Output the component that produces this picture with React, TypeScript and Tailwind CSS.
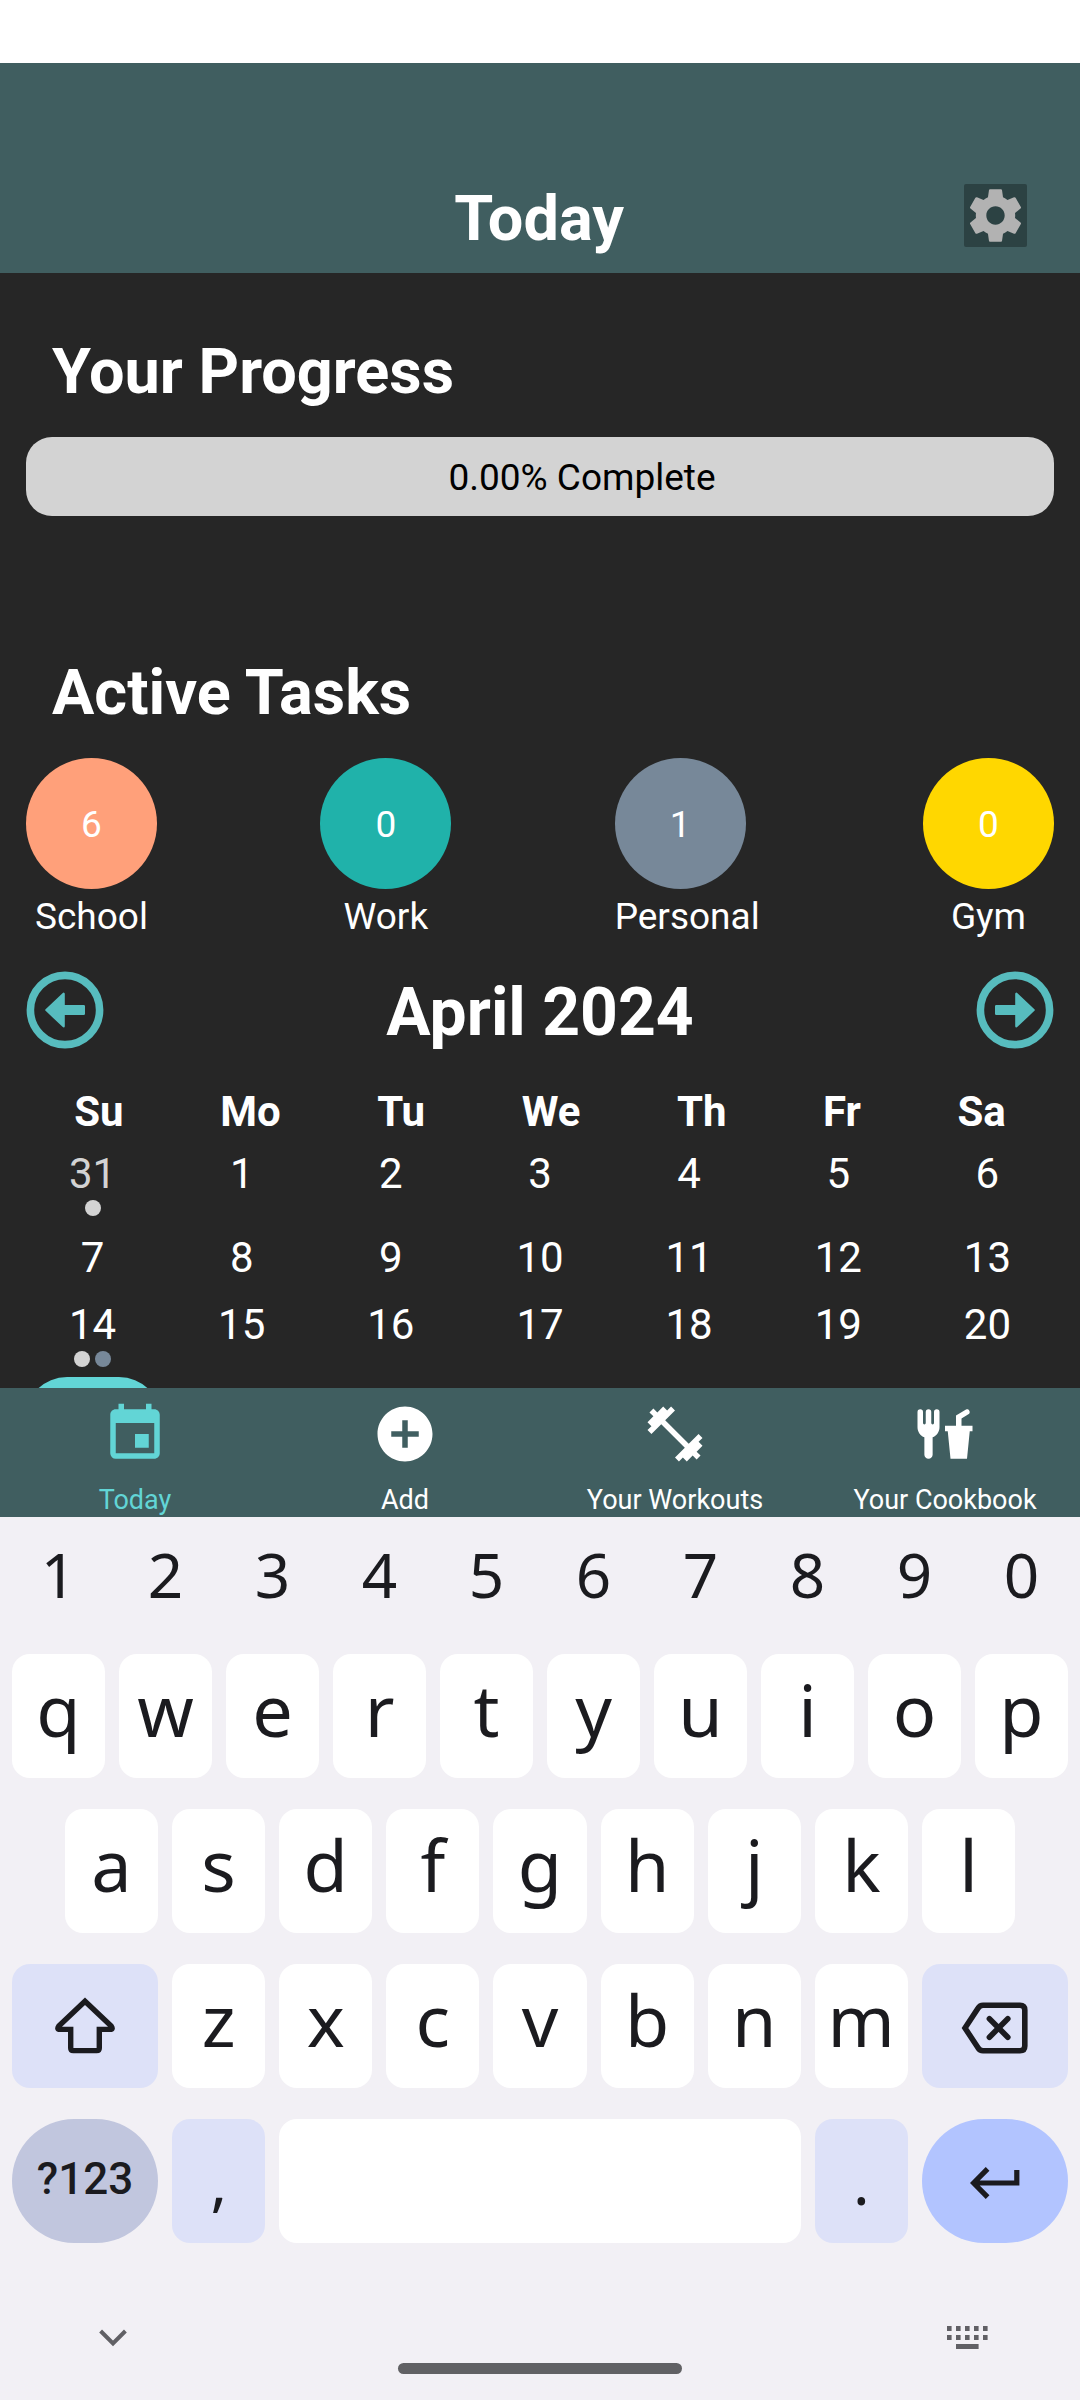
import type { ReactNode } from "react";
import { MdAddCircle, MdEvent, MdFitnessCenter } from "react-icons/md";

const categories = [
  { name: "School", count: 6, color: "bg-[#ffa07a]" },
  { name: "Work", count: 0, color: "bg-[#20b2aa]" },
  { name: "Personal", count: 1, color: "bg-[#778899]" },
  { name: "Gym", count: 0, color: "bg-[#ffd700]" },
];

const weekdays = ["Su", "Mo", "Tu", "We", "Th", "Fr", "Sa"];

type Day = { day: number; muted?: boolean; dots?: string[] };

const weeks: Day[][] = [
  [{ day: 31, muted: true, dots: ["bg-[#d3d3d3]"] }, { day: 1 }, { day: 2 }, { day: 3 }, { day: 4 }, { day: 5 }, { day: 6 }],
  [7, 8, 9, 10, 11, 12, 13].map((day) => ({ day })),
  [{ day: 14, dots: ["bg-[#d3d3d3]", "bg-[#778899]"] }, { day: 15 }, { day: 16 }, { day: 17 }, { day: 18 }, { day: 19 }, { day: 20 }],
];

function GearIcon() {
  return (
    <svg viewBox="0 0 24 24" className="size-full" fill="#b2b2b2" aria-hidden="true">
      <path d="M19.43 12.98c.04-.32.07-.64.07-.98s-.03-.66-.07-.98l2.11-1.65c.19-.15.24-.42.12-.64l-2-3.46c-.12-.22-.39-.3-.61-.22l-2.49 1c-.52-.4-1.08-.73-1.69-.98l-.38-2.65C14.46 2.18 14.25 2 14 2h-4c-.25 0-.46.18-.49.42l-.38 2.65c-.61.25-1.17.59-1.69.98l-2.49-1c-.23-.09-.49 0-.61.22l-2 3.46c-.13.22-.07.49.12.64l2.11 1.65c-.04.32-.07.65-.07.98s.03.66.07.98l-2.11 1.65c-.19.15-.24.42-.12.64l2 3.46c.12.22.39.3.61.22l2.49-1c.52.4 1.08.73 1.69.98l.38 2.65c.03.24.24.42.49.42h4c.25 0 .46-.18.49-.42l.38-2.65c.61-.25 1.17-.59 1.69-.98l2.49 1c.23.09.49 0 .61-.22l2-3.46c.12-.22.07-.49-.12-.64l-2.11-1.65zM12 15.5c-1.93 0-3.5-1.57-3.5-3.5s1.57-3.5 3.5-3.5 3.5 1.57 3.5 3.5-1.57 3.5-3.5 3.5z" />
    </svg>
  );
}

function CircleArrow({ flip = false }: { flip?: boolean }) {
  return (
    <svg viewBox="0 0 78 78" className={flip ? "size-[78px] -scale-x-100" : "size-[78px]"} fill="none" aria-hidden="true">
      <circle cx="39" cy="39" r="34.6" stroke="#57bcbe" strokeWidth="7.6" />
      <path
        d="M20.4 39 37.6 22.8V35.2H57.8V42.8H37.6V55.2Z"
        fill="#57bcbe"
        stroke="#57bcbe"
        strokeWidth="2.4"
        strokeLinejoin="round"
      />
    </svg>
  );
}

function ForkDrinkIcon() {
  return (
    <svg viewBox="0 0 24 24" className="size-[66px]" fill="currentColor" aria-hidden="true">
      <path d="M3,3A1,1 0 0,0 2,4V8L2,9.5C2,11.19 3.03,12.63 4.5,13.22V19.5A1.5,1.5 0 0,0 6,21A1.5,1.5 0 0,0 7.5,19.5V13.22C8.97,12.63 10,11.19 10,9.5V8L10,4A1,1 0 0,0 9,3A1,1 0 0,0 8,4V8A0.5,0.5 0 0,1 7.5,8.5A0.5,0.5 0 0,1 7,8V4A1,1 0 0,0 6,3A1,1 0 0,0 5,4V8A0.5,0.5 0 0,1 4.5,8.5A0.5,0.5 0 0,1 4,8V4A1,1 0 0,0 3,3M19.88,3C19.75,3 19.62,3.09 19.5,3.16L16,5.25V9H12V11H13L14,21H20L21,11H22V9H18V6.34L20.5,4.84C21,4.56 21.13,4 20.84,3.5C20.63,3.14 20.26,2.95 19.88,3Z" />
    </svg>
  );
}

function ShiftIcon() {
  return (
    <svg viewBox="0 0 60 58" className="h-[58px] w-[60px]" fill="none" stroke="#1b1b1f" strokeWidth="5.4" aria-hidden="true">
      <path d="M30 4.2 3.8 29Q1.4 32.4 5 32.4H15.7V51Q15.7 53.6 18.3 53.6H41.7Q44.3 53.6 44.3 51V32.4H55Q58.6 32.4 56.2 29Z" />
    </svg>
  );
}

function BackspaceIcon() {
  return (
    <svg viewBox="0 0 68 54" className="h-[54px] w-[68px]" fill="none" stroke="#1b1b1f" strokeWidth="5.6" aria-hidden="true">
      <path d="M4 27 17 7.2Q18.8 4.2 22 4.2H59Q63.8 4.2 63.8 9V45Q63.8 49.8 59 49.8H22Q18.8 49.8 17 46.8Z" />
      <path d="M28.4 17.8 46.8 36.2M46.8 17.8 28.4 36.2" strokeLinecap="round" />
    </svg>
  );
}

function EnterIcon() {
  return (
    <svg viewBox="0 0 50 32" className="h-8 w-[50px]" fill="none" stroke="#1b1b1f" strokeWidth="5.2" aria-hidden="true">
      <path d="M17.6 1.8 3.6 16 17.6 30.2M3.6 16H46.8V3" />
    </svg>
  );
}

function SwitchKeyboardIcon() {
  const cols = [0, 9, 18, 27, 36];
  return (
    <svg viewBox="0 0 41 24" className="h-6 w-[41px]" fill="#616065" aria-hidden="true">
      {cols.map((x) => (
        <path key={x} d={`M${x} 0h4.6v5h-4.6zM${x} 9h4.6v5h-4.6z`} />
      ))}
      <path d="M9 18h22.6v5H9z" />
    </svg>
  );
}

function Tab({ icon, label, active = false }: { icon: ReactNode; label: string; active?: boolean }) {
  return (
    <button
      type="button"
      aria-current={active ? "page" : undefined}
      className={
        active
          ? "flex flex-1 flex-col items-center gap-4 pt-[13px] text-[#62d5d6]"
          : "flex flex-1 flex-col items-center gap-4 pt-[13px] text-white"
      }
    >
      {icon}
      <span className="text-[27px] leading-[34px] whitespace-nowrap">{label}</span>
    </button>
  );
}

function LetterKey({ letter }: { letter: string }) {
  return (
    <button
      type="button"
      className="flex h-[124px] flex-[93] basis-0 items-center justify-center rounded-[18px] bg-white pb-[14px] text-[72px] leading-none"
    >
      {letter}
    </button>
  );
}

function Keyboard() {
  return (
    <section aria-label="Keyboard" className="shrink-0 bg-[#f2f0f5] pt-2 font-['Noto_Sans',sans-serif] text-[#1b1b1f]">
      <div className="flex flex-col gap-[31px] px-3">
        <div className="flex gap-[14px]">
          {[..."1234567890"].map((n) => (
            <button key={n} type="button" className="flex h-[98px] flex-1 items-center justify-center text-[62px] leading-none">
              {n}
            </button>
          ))}
        </div>
        <div className="flex gap-[14px]">
          {[..."qwertyuiop"].map((l) => (
            <LetterKey key={l} letter={l} />
          ))}
        </div>
        <div className="flex gap-[14px] px-[5%]">
          {[..."asdfghjkl"].map((l) => (
            <LetterKey key={l} letter={l} />
          ))}
        </div>
        <div className="flex gap-[14px]">
          <button type="button" aria-label="Shift" className="flex h-[124px] flex-[146] basis-0 items-center justify-center rounded-[18px] bg-[#dde1f8]">
            <ShiftIcon />
          </button>
          {[..."zxcvbnm"].map((l) => (
            <LetterKey key={l} letter={l} />
          ))}
          <button type="button" aria-label="Backspace" className="flex h-[124px] flex-[146] basis-0 items-center justify-center rounded-[18px] bg-[#dde1f8] pt-1">
            <BackspaceIcon />
          </button>
        </div>
        <div className="flex gap-[14px]">
          <button type="button" className="flex h-[124px] flex-[146] basis-0 items-center justify-center rounded-[62px] bg-[#c1c6de] pb-1 font-[Roboto,sans-serif] text-[44px] leading-none font-medium">
            ?123
          </button>
          <button type="button" className="flex h-[124px] flex-[93] basis-0 items-center justify-center rounded-[18px] bg-[#dde1f8] text-[62px] leading-none">
            ,
          </button>
          <button type="button" aria-label="Space" className="h-[124px] flex-[521] basis-0 rounded-[18px] bg-white" />
          <button type="button" className="flex h-[124px] flex-[93] basis-0 items-center justify-center rounded-[18px] bg-[#dde1f8] text-[62px] leading-none">
            .
          </button>
          <button type="button" aria-label="Enter" className="flex h-[124px] flex-[146] basis-0 items-center justify-center rounded-[62px] bg-[#b2c4ff] pt-1">
            <EnterIcon />
          </button>
        </div>
      </div>
      <div className="flex items-center justify-between pt-[83px] pr-[92px] pl-[99px]">
        <button type="button" aria-label="Hide keyboard">
          <svg viewBox="0 0 28 18" className="h-[18px] w-7" fill="none" stroke="#616065" strokeWidth="4" aria-hidden="true">
            <path d="M1.6 2 14 14.4 26.4 2" />
          </svg>
        </button>
        <button type="button" aria-label="Switch keyboard">
          <SwitchKeyboardIcon />
        </button>
      </div>
      <div className="flex justify-center pt-[13px] pb-[26px]">
        <div className="h-[11px] w-[284px] rounded-md bg-[#616164]" />
      </div>
    </section>
  );
}

export default function App() {
  return (
    <div className="flex h-screen flex-col bg-[#262626] font-[Roboto,sans-serif] text-white">
      <div className="h-[63px] shrink-0 bg-white" />
      <header className="grid h-[210px] shrink-0 grid-cols-[1fr_auto_1fr] items-end bg-[#405e60] pr-[53px] pb-[15px]">
        <h1 className="col-start-2 pl-[51px] text-[63px] leading-[78px] font-bold">Today</h1>
        <button type="button" aria-label="Settings" className="mb-[11px] size-[63px] justify-self-end rounded-[2px] bg-[#2c4243]">
          <GearIcon />
        </button>
      </header>

      <main className="min-h-0 flex-1 overflow-hidden pt-[62px]">
        <h2 className="px-[52px] text-[63px] leading-[74px] font-bold">Your Progress</h2>
        <div
          role="progressbar"
          aria-label="Your progress"
          aria-valuenow={0}
          className="mx-[26px] mt-7 flex h-[79px] items-center justify-center rounded-[26px] bg-[#d3d3d3] pt-[2px] pl-[84px] text-[37px] leading-[44px] text-black"
        >
          0.00% Complete
        </div>

        <h2 className="mt-[140px] px-[52px] text-[63px] leading-[74px] font-bold">Active Tasks</h2>
        <div className="mx-[26px] mt-7 flex justify-between text-[37px] leading-[44px]">
          {categories.map((c) => (
            <div key={c.name}>
              <div className={`flex size-[131px] items-center justify-center rounded-full pt-[2px] ${c.color}`}>{c.count}</div>
              <div className="mt-[6px] text-center">{c.name}</div>
            </div>
          ))}
        </div>

        <div className="mx-[26px] mt-8 flex items-start justify-between">
          <button type="button" aria-label="Previous month">
            <CircleArrow />
          </button>
          <h2 className="text-[66px] leading-[84px] font-bold">April 2024</h2>
          <button type="button" aria-label="Next month">
            <CircleArrow flip />
          </button>
        </div>

        <div className="mx-[26px] mt-8 flex justify-around text-[42px] leading-[50px] font-bold">
          {weekdays.map((d) => (
            <div key={d}>{d}</div>
          ))}
        </div>
        <div className="mx-[18px] mt-1 flex flex-col gap-[9px]">
          {weeks.map((week) => (
            <div key={week[0].day} className="grid grid-cols-7 items-start">
              {week.map(({ day, muted, dots }) => (
                <button key={day} type="button" className="flex flex-col items-center pt-2 text-[42px] leading-[50px]">
                  <span className={muted ? "text-[#d3d3d3]" : "text-white"}>{day}</span>
                  {dots && (
                    <span className="mt-px flex gap-[5px]">
                      {dots.map((dot) => (
                        <span key={dot} className={`size-4 rounded-full ${dot}`} />
                      ))}
                    </span>
                  )}
                </button>
              ))}
            </div>
          ))}
          <div className="grid grid-cols-7">
            <button type="button" aria-label="Selected day" className="mt-px h-[84px] w-[136px] justify-self-center rounded-[42px] bg-[#62d5d6]" />
          </div>
        </div>
      </main>

      <nav className="flex h-[129px] shrink-0 bg-[#405e60]">
        <Tab active label="Today" icon={<MdEvent className="size-[66px]" />} />
        <Tab label="Add" icon={<MdAddCircle className="size-[66px]" />} />
        <Tab label="Your Workouts" icon={<MdFitnessCenter className="size-[66px]" />} />
        <Tab label="Your Cookbook" icon={<ForkDrinkIcon />} />
      </nav>

      <Keyboard />
    </div>
  );
}
